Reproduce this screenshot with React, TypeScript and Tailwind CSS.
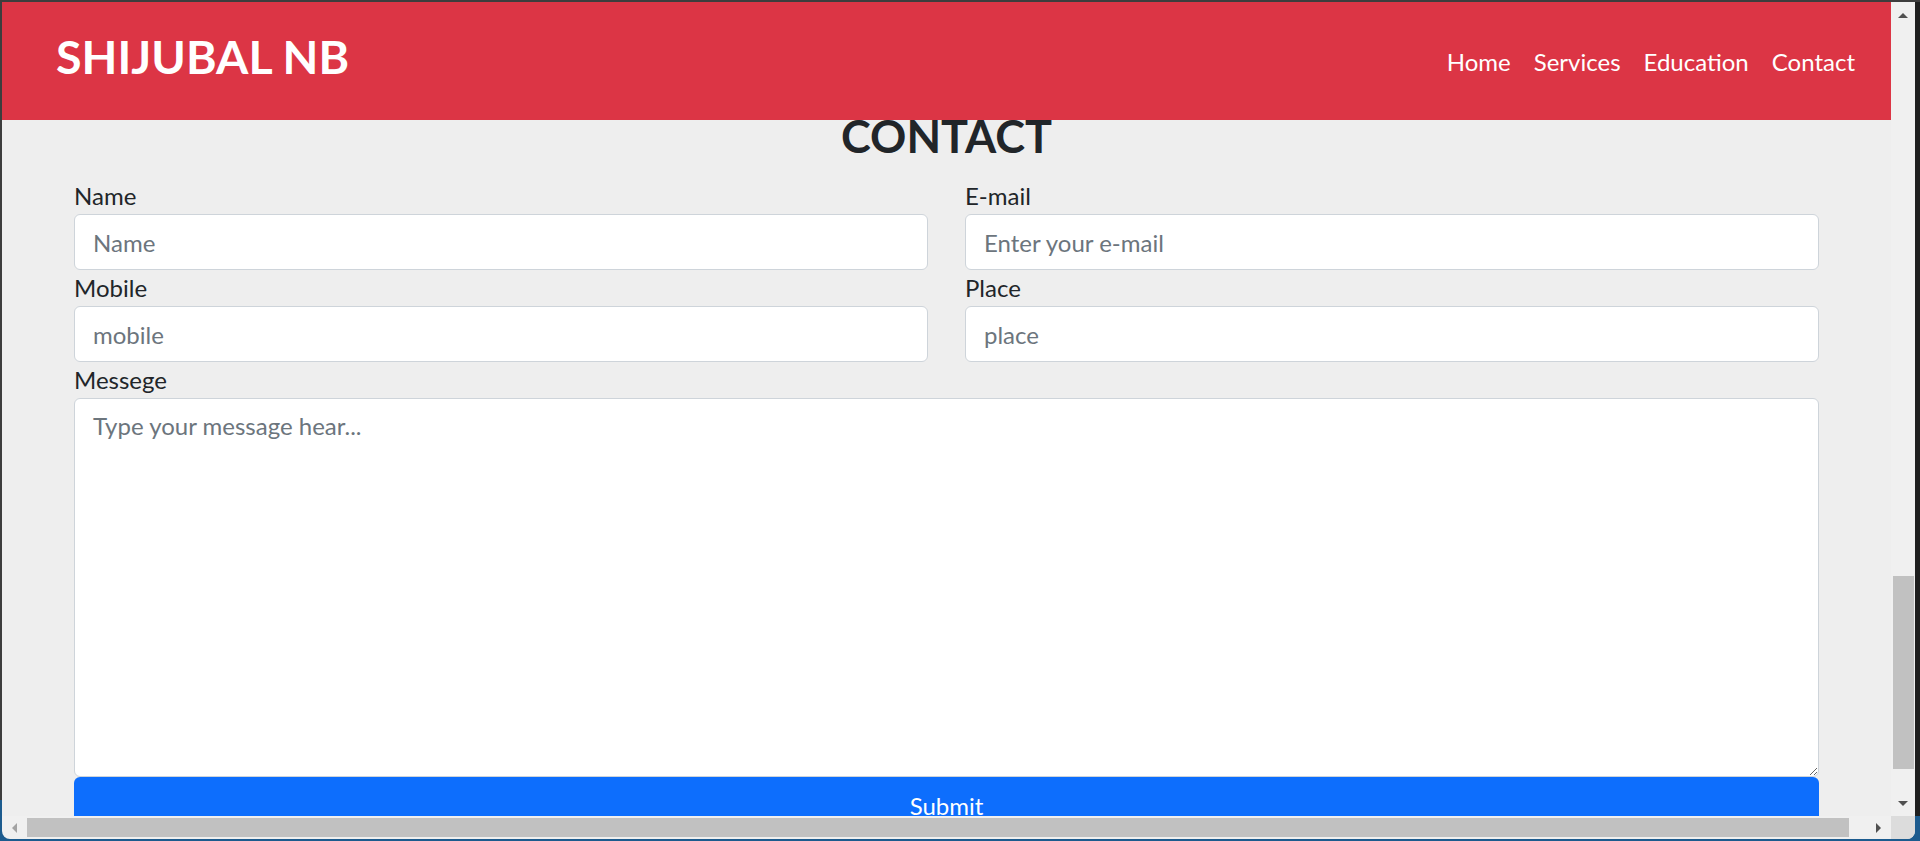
import React from "react";

function Field({ label, placeholder }: { label: string; placeholder: string }) {
  return (
    <div className="flex flex-col">
      <label className="text-[24px] leading-[36px] text-[#212529]">{label}</label>
      <input
        placeholder={placeholder}
        className="block h-[56px] w-full rounded-[6px] border border-[#ced4da] bg-white px-[18px] text-[24px] text-[#212529] outline-none placeholder:text-[#6c757d]"
      />
    </div>
  );
}

export default function App() {
  return (
    <div
      className="flex h-[841px] w-[1920px] flex-col overflow-hidden bg-[#1c5b8e]"
      style={{ fontFamily: "Lato, 'Open Sans', sans-serif" }}
    >
      <div className="h-[2px] shrink-0 bg-[#3d3d3d]" />
      <div className="flex min-h-0 flex-1">
        <div className="flex w-[2px] shrink-0 flex-col">
          <div className="h-[798px] bg-[#3d3d3d]" />
          <div className="flex-1 bg-[#1c5b8e]" />
        </div>
        <div className="flex min-w-0 flex-1 flex-col">
          <div className="flex min-h-0 flex-1">
            {/* page */}
            <div className="flex min-w-0 flex-1 flex-col overflow-hidden bg-[#eeeeee]">
              <nav className="flex h-[118px] shrink-0 items-center justify-between bg-[#dc3545] pl-[54px] pr-[36px] text-white">
                <div className="pb-[9px] text-[46.6px] font-bold leading-[47px]">SHIJUBAL NB</div>
                <div className="flex gap-[23px] pt-[2px] text-[24px] leading-[36px]">
                  <span>Home</span>
                  <span>Services</span>
                  <span>Education</span>
                  <span>Contact</span>
                </div>
              </nav>
              <div className="flex flex-col px-[72px]">
                <h2 className="mb-[25px] text-center text-[45px] font-bold leading-[33px] text-[#212529]">CONTACT</h2>
                <div className="grid grid-cols-2 gap-x-[37px]">
                  <Field label="Name" placeholder="Name" />
                  <Field label="E-mail" placeholder="Enter your e-mail" />
                  <Field label="Mobile" placeholder="mobile" />
                  <Field label="Place" placeholder="place" />
                </div>
                <label className="text-[24px] leading-[36px] text-[#212529]">Messege</label>
                <textarea
                  placeholder="Type your message hear..."
                  className="block h-[379px] w-full rounded-[6px] border border-[#ced4da] bg-white px-[18px] pt-[9px] text-[24px] leading-[36px] text-[#212529] outline-none placeholder:text-[#6c757d]"
                />
                <button className="block h-[57px] w-full rounded-[6px] bg-[#0d6efd] text-[24px] leading-[36px] text-white">
                  Submit
                </button>
              </div>
            </div>
            {/* vertical scrollbar */}
            <div className="flex w-[24px] shrink-0 flex-col bg-[#f0f0f0]">
              <div className="flex h-[26px] items-center justify-center">
                <div className="h-0 w-0 border-x-[5px] border-b-[5px] border-x-transparent border-b-[#505050]" />
              </div>
              <div className="flex flex-1 flex-col pl-[2px] pr-[1px]">
                <div className="mt-[548px] h-[193px] bg-[#c1c1c1]" />
              </div>
              <div className="flex h-[26px] items-center justify-center">
                <div className="h-0 w-0 border-x-[5px] border-t-[5px] border-x-transparent border-t-[#505050]" />
              </div>
            </div>
          </div>
          {/* horizontal scrollbar */}
          <div className="flex h-[23px] shrink-0 overflow-hidden rounded-bl-[8px] rounded-br-[8px] bg-[#f0f0f0]">
            <div className="flex w-[25px] shrink-0 items-center justify-center">
              <div className="h-0 w-0 border-y-[5px] border-r-[5px] border-y-transparent border-r-[#a3a3a3]" />
            </div>
            <div className="flex min-w-0 flex-1 py-[2px]">
              <div className="w-[1822px] bg-[#c1c1c1]" />
            </div>
            <div className="flex w-[25px] shrink-0 items-center justify-center">
              <div className="h-0 w-0 border-y-[5px] border-l-[5px] border-y-transparent border-l-[#505050]" />
            </div>
            <div className="w-[24px] shrink-0 bg-[#dcdcdc]" />
          </div>
        </div>
        <div className="flex w-[5px] shrink-0 flex-col">
          <div className="h-[814px] bg-[#1f1f1f]" />
          <div className="flex-1 bg-[#1c5b8e]" />
        </div>
      </div>
      <div className="h-[2px] shrink-0 bg-[#1c5b8e]" />
    </div>
  );
}
